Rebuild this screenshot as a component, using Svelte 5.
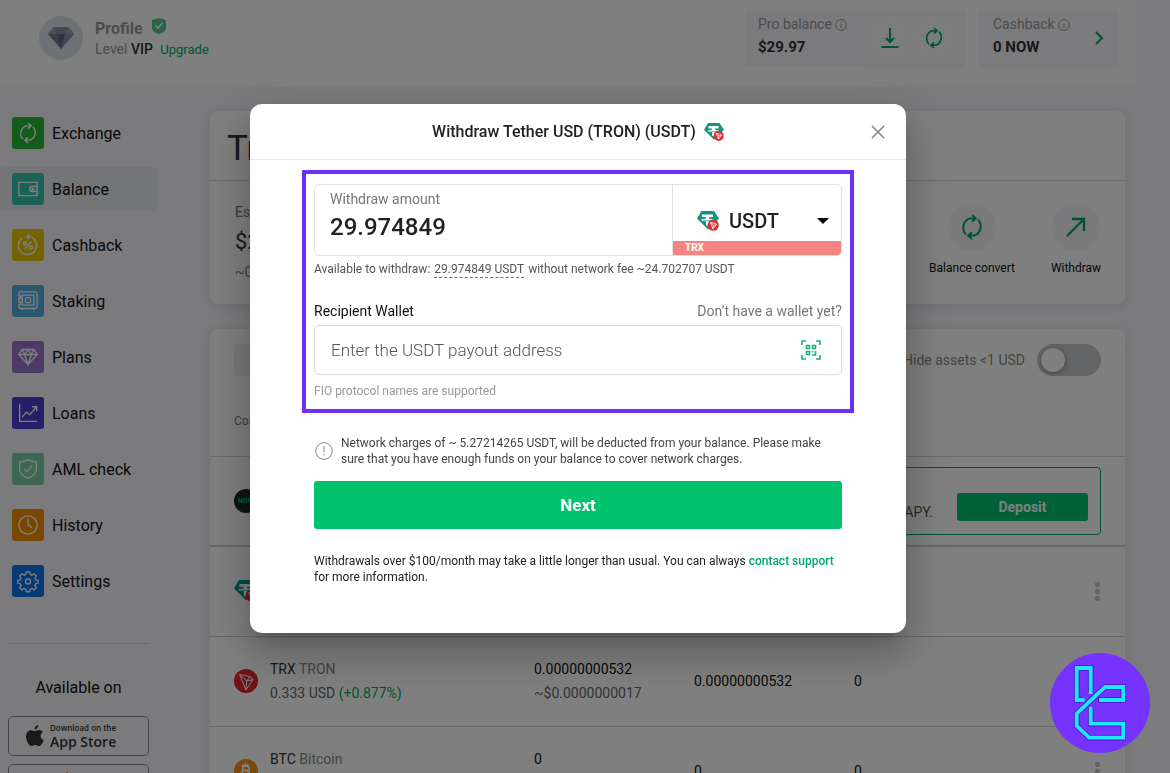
<script lang="ts">
  type NavItem = { label: string; color: string; icon: string };
  type Asset = {
    code: string;
    name: string;
    price: string;
    change: string;
    balance: string;
    value: string;
    available: string;
    locked: string;
    icon: string;
  };

  const nav: NavItem[] = [
    { label: 'Exchange', color: '#28b833', icon: 'exchange' },
    { label: 'Balance', color: '#36c4b2', icon: 'wallet' },
    { label: 'Cashback', color: '#e8c800', icon: 'percent' },
    { label: 'Staking', color: '#55aee0', icon: 'safe' },
    { label: 'Plans', color: '#9b74cc', icon: 'gem' },
    { label: 'Loans', color: '#4b3fd0', icon: 'chart' },
    { label: 'AML check', color: '#76cfa6', icon: 'shield' },
    { label: 'History', color: '#f58f00', icon: 'clock' },
    { label: 'Settings', color: '#0a74ea', icon: 'gear' },
  ];

  const assets: Asset[] = [
    { code: 'USDT', name: 'Tether', price: '1.000 USD', change: '(+0.01%)', balance: '29.974849', value: '~$29.97', available: '29.974849', locked: '0', icon: 'usdt' },
    { code: 'TRX', name: 'TRON', price: '0.333 USD', change: '(+0.877%)', balance: '0.00000000532', value: '~$0.0000000017', available: '0.00000000532', locked: '0', icon: 'trx' },
    { code: 'BTC', name: 'Bitcoin', price: '0 USD', change: '(+0%)', balance: '0', value: '~$0', available: '0', locked: '0', icon: 'btc' },
  ];

  let open = true;
  let amount = '29.974849';
  let currency = 'USDT';
  let address = '';
  let hideSmall = false;
</script>

{#snippet convert()}
  <path d="M6 19.500A10 10 0 0 1 9.500 3.400H15.500M12 0l3.800 3.400L12 6.800M18 4.500A10 10 0 0 1 14.500 20.600H8.500M12 17.200l-3.800 3.400L12 24" />
{/snippet}

{#snippet tether(size: number)}
  <svg width={size} height={size} viewBox="0 0 22 22" aria-hidden="true">
    <path d="M4.500 1h12.500L22 8.600 11 19.500 0 8.600z" fill="#109585" />
    <path d="M5 4.500h11v2.600h-4v1.400c2.800.2 4.800.7 4.800 1.400s-2 1.200-4.800 1.400v4.200H9v-4.200c-2.800-.2-4.800-.7-4.800-1.400S6.200 8.700 9 8.500V7.100H5z" fill="#fff" />
    <path d="M5.800 9.900c2.800.8 6.600.8 9.400 0" fill="none" stroke="#109585" stroke-width=".7" />
    <circle cx="16.200" cy="15.200" r="5.600" fill="#e02d33" />
    <path d="M13.500 12.600l5 .9 1 1.200-3.600 4zM13.500 12.600l3 2.800 3-.7M16.500 15.400l-.6 3.300" fill="none" stroke="#fff" stroke-width=".8" />
  </svg>
{/snippet}

{#snippet info()}
  <svg class="info" width="12" height="12" viewBox="0 0 12 12" aria-hidden="true">
    <circle cx="6" cy="6" r="5.400" />
    <path d="M6 5v4M6 2.800v1" />
  </svg>
{/snippet}

<div class="page">
  <header class="topbar">
    <div class="avatar">
      <svg width="26" height="24" viewBox="0 0 26 24" aria-hidden="true">
        <path d="M6 1h14l6 7-13 15L0 8z" fill="#707c94" />
        <path d="M6 1l3 7H0zM20 1l-3 7h9z" fill="#9aa5ba" />
        <path d="M6 1h14l-3 7H9z" fill="#8490a8" />
        <path d="M9 8h8l-4 15z" fill="#5c6881" />
        <path d="M17 8h9L13 23z" fill="#8490a8" />
      </svg>
    </div>
    <div class="profile">
      <div class="profile-name">
        <strong>Profile</strong>
        <svg width="14" height="16" viewBox="0 0 14 16" aria-hidden="true">
          <path d="M7 0l7 2v7c0 4-3 6-7 7-4-1-7-3-7-7V2z" fill="#58c493" />
          <path d="M3.500 7.500L6 10l4.500-5" fill="none" stroke="#fff" stroke-width="1.400" />
        </svg>
      </div>
      <div class="profile-level">Level <b>VIP</b> <a href="#upgrade">Upgrade</a></div>
    </div>
    <section class="stat stat-pro">
      <div class="stat-copy">
        <span>Pro balance {@render info()}</span>
        <strong>$29.97</strong>
      </div>
      <button type="button" aria-label="Deposit funds">
        <svg width="20" height="22" viewBox="0 0 20 22" aria-hidden="true"><path d="M10 1v14M6 11l4 4 4-4" /><path d="M1.500 20h17" stroke-width="2" /></svg>
      </button>
      <button type="button" aria-label="Convert">
        <svg width="20" height="20" viewBox="0 0 24 24" aria-hidden="true">{@render convert()}</svg>
      </button>
    </section>
    <section class="stat stat-cashback">
      <div class="stat-copy">
        <span>Cashback {@render info()}</span>
        <strong>0 NOW</strong>
      </div>
      <button type="button" class="chevron" aria-label="Open cashback">
        <svg width="10" height="14" viewBox="0 0 10 14" aria-hidden="true"><path d="M2 1l6 6-6 6" stroke-width="2" /></svg>
      </button>
    </section>
  </header>

  <div class="layout">
    <aside>
      <nav>
        {#each nav as item}
          <a href={`#${item.icon}`} class:active={item.label === 'Balance'}>
            <span class="nav-icon" style={`background:${item.color}`}>
              <svg width="20" height="20" viewBox="0 0 24 24" aria-hidden="true">
                {#if item.icon === 'exchange'}
                  {@render convert()}
                {:else if item.icon === 'wallet'}
                  <path d="M1 4h22v16H1zM23 9h-6a3 3 0 0 0 0 6h6M17 11.500h1.500v1.500H17z" />
                {:else if item.icon === 'percent'}
                  <path d="M17 3A11 11 0 1 1 5 3.500M16 2h-5M13.500-.8L10.500 2l3 2.800M8 17l8-9" />
                  <circle cx="8.500" cy="10" r="1.800" />
                  <circle cx="15.500" cy="15" r="1.800" />
                {:else if item.icon === 'safe'}
                  <path d="M3 1h18a2 2 0 0 1 2 2v16a2 2 0 0 1-2 2H3a2 2 0 0 1-2-2v-3h2v-3H1V9h2V6H1V3a2 2 0 0 1 2-2zM5 5h14v12H5zM5 21v2M19 21v2" />
                  <rect x="9" y="8" width="6" height="6" rx="2" />
                {:else if item.icon === 'gem'}
                  <path d="M5 3h14l4 6-11 12L1 9zM1 9h22M5 3l3 6 4-6 4 6 3-6M8 9l4 12 4-12" />
                {:else if item.icon === 'chart'}
                  <path d="M2 1v21h21M5 17l5-6 4 3 8-9M17 4.500h5.500V10" />
                {:else if item.icon === 'shield'}
                  <path d="M12 1l10 3v8c0 6-4 9-10 11C6 21 2 18 2 12V4zM7.500 11.500l3.500 4 6-8" />
                {:else if item.icon === 'clock'}
                  <circle cx="12" cy="12" r="11" />
                  <path d="M12 4.500V12l5 3.500" />
                {:else}
                  <path d="M10 1h4l.7 3 2 1 2.700-1.700 2.600 2.700-1.600 2.700.8 2 3 .8v3l-3 .8-.8 2 1.600 2.700-2.600 2.700-2.700-1.700-2 .9-.7 3h-4l-.7-3-2-.9-2.700 1.700L2 20l1.600-2.700-.8-2-3-.8v-3l3-.8.8-2L2 6l2.600-2.700L7.300 5l2-1z" />
                  <circle cx="12" cy="12.500" r="3" />
                {/if}
              </svg>
            </span>
            {item.label}
          </a>
        {/each}
      </nav>
      <hr />
      <p class="available-on">Available on</p>
      <a class="store" href="#app-store">
        <svg width="18" height="22" viewBox="0 0 18 22" aria-hidden="true">
          <path d="M12.300 0c.2 2-1.500 4.500-3.800 4.600C8.300 2.500 10.300.3 12.300 0zM9.200 6c1.200 0 2-1 3.800-1 1.600 0 3 .8 3.900 2.100-3.400 2-2.900 6.700.9 8.100-.7 2-2.800 5.800-5 5.800-1.400 0-1.900-.9-3.500-.9s-2.200.9-3.500.9C2.800 21 0 15.500 0 11.700 0 7.500 2.600 5.200 5.200 5.200c1.600 0 2.800.8 4 .8z" />
        </svg>
        <span><small>Download on the</small>App Store</span>
      </a>
      <a class="store" href="#google-play">
        <svg width="18" height="22" viewBox="0 0 18 22" aria-hidden="true"><path d="M1 1l16 10L1 21z" /></svg>
        <span><small>Get it on</small>Google Play</span>
      </a>
    </aside>

    <main>
      <section class="card">
        <h1>Trading balance</h1>
        <div class="summary">
          <div class="estimate">
            <span>Estimated balance</span>
            <strong>$29.97</strong>
            <span>~0.00028 BTC</span>
          </div>
          <button type="button" class="action">
            <span><svg width="24" height="24" viewBox="0 0 24 24" aria-hidden="true">{@render convert()}</svg></span>
            Balance convert
          </button>
          <button type="button" class="action action-withdraw">
            <span><svg width="20" height="20" viewBox="0 0 20 20" aria-hidden="true"><path d="M1 19L18 2M6 2h12v12" stroke-width="2.400" /></svg></span>
            Withdraw
          </button>
        </div>
      </section>

      <section class="card">
        <div class="filters">
          <input class="search" type="search" aria-label="Search assets" />
          <label class="hide-small">
            Hide assets &lt;1 USD
            <input type="checkbox" role="switch" bind:checked={hideSmall} />
          </label>
        </div>
        <table>
          <colgroup>
            <col class="col-coin" />
            <col class="col-sum" />
            <col class="col-sum" />
            <col />
            <col class="col-menu" />
          </colgroup>
          <thead>
            <tr><th>Coin</th><th>Balance</th><th>Available</th><th>Locked</th><th aria-label="Menu"></th></tr>
          </thead>
          <tbody>
            <tr class="promo-row">
              <td colspan="5">
                <div class="promo-wrap">
                  <span class="now-badge">NOW</span>
                  <div class="promo">
                    <span>Stake NOW tokens and earn up to 25% APY.</span>
                    <button type="button">Deposit</button>
                  </div>
                </div>
              </td>
            </tr>
            {#each assets as asset}
              <tr>
                <td>
                  <div class="coin">
                    {#if asset.icon === 'usdt'}
                      {@render tether(24)}
                    {:else if asset.icon === 'trx'}
                      <svg width="24" height="24" viewBox="0 0 24 24" aria-hidden="true">
                        <circle cx="12" cy="12" r="12" fill="#e0232b" />
                        <path d="M5.500 5.500l10.500 2 3 3.200L11.800 21zM5.500 5.500l7.300 6.400L19 10.700M12.800 11.900l-1 9.100M12.800 11.900L16 7.500" fill="none" stroke="#fff" />
                      </svg>
                    {:else}
                      <svg width="24" height="24" viewBox="0 0 24 24" aria-hidden="true">
                        <circle cx="12" cy="12" r="12" fill="#f7931a" />
                        <path d="M9.500 6.500l-2 10.500M8 6.300l4.500.8c4.500.8 3.500 5-.5 4.500l-3-.5M12 11.600c4.800.8 3.800 6-.8 5.200L6 16M11.500 4.500l-.5 2.300M14 5l-.5 2.300M9.500 17l-.5 2.500M12 17.300l-.5 2.500" fill="none" stroke="#fff" stroke-width="1.800" />
                      </svg>
                    {/if}
                    <div>
                      <b>{asset.code}</b> {asset.name}<br />
                      <span class="price">{asset.price}</span> <span class="up">{asset.change}</span>
                    </div>
                  </div>
                </td>
                <td>{asset.balance}<br /><span class="price">{asset.value}</span></td>
                <td>{asset.available}</td>
                <td>{asset.locked}</td>
                <td>
                  <button type="button" class="kebab" aria-label={`${asset.code} menu`}>
                    <i></i><i></i><i></i>
                  </button>
                </td>
              </tr>
            {/each}
          </tbody>
        </table>
      </section>
    </main>
  </div>
</div>

{#if open}
  <div class="overlay">
    <div class="modal" role="dialog" aria-modal="true" aria-labelledby="withdraw-title">
      <div class="modal-head">
        <h2 id="withdraw-title">Withdraw Tether USD (TRON) (USDT)</h2>
        {@render tether(20)}
        <button type="button" class="close" aria-label="Close" on:click={() => (open = false)}>
          <svg width="14" height="14" viewBox="0 0 14 14" aria-hidden="true"><path d="M1 1l12 12M13 1L1 13" /></svg>
        </button>
      </div>

      <form on:submit|preventDefault>
        <div class="highlight">
          <div class="amount-field">
            <div class="amount">
              <label for="amount">Withdraw amount</label>
              <input id="amount" type="text" inputmode="decimal" bind:value={amount} />
            </div>
            <div class="currency">
              <div class="currency-pick">
                {@render tether(22)}
                <select aria-label="Currency" bind:value={currency}>
                  <option>USDT</option>
                  <option>TRX</option>
                  <option>BTC</option>
                </select>
                <svg class="caret" width="12" height="6" viewBox="0 0 12 6" aria-hidden="true"><path d="M0 0h12L6 6z" /></svg>
              </div>
              <span class="network">TRX</span>
            </div>
          </div>
          <p class="limits">
            Available to withdraw:
            <button type="button" on:click={() => (amount = '29.974849')}>29.974849 USDT</button>
            without network fee ~24.702707 USDT
          </p>

          <div class="wallet-head">
            <label for="wallet">Recipient Wallet</label>
            <a href="#wallet-help">Don’t have a wallet yet?</a>
          </div>
          <div class="wallet-field">
            <input id="wallet" type="text" placeholder="Enter the USDT payout address" bind:value={address} />
            <button type="button" aria-label="Scan QR code">
              <svg width="20" height="20" viewBox="0 0 20 20" aria-hidden="true">
                <path d="M1 5V1h4M15 1h4v4M19 15v4h-4M5 19H1v-4" />
                <path d="M5.500 5.500h3v3h-3zM11.500 5.500h3v3h-3zM5.500 11.500h3v3h-3zM11.500 11v1.500M14.500 11v4h-3.500" />
              </svg>
            </button>
          </div>
          <p class="fio">FIO protocol names are supported</p>
        </div>

        <div class="notice">
          <svg width="18" height="18" viewBox="0 0 18 18" aria-hidden="true">
            <circle cx="9" cy="9" r="8.300" />
            <path d="M9 4v6.500M9 12v1.500" />
          </svg>
          <p>
            Network charges of ~ 5.27214265 USDT, will be deducted from your balance. Please make sure that you have
            enough funds on your balance to cover network charges.
          </p>
        </div>
        <button type="submit" class="next">Next</button>
        <p class="support">
          Withdrawals over $100/month may take a little longer than usual. You can always
          <a href="#support">contact support</a> for more information.
        </p>
      </form>
    </div>
  </div>
{/if}

<svg class="brand" width="100" height="100" viewBox="0 0 100 100" role="img" aria-label="Brand mark">
  <circle cx="50" cy="50" r="50" fill="#7632ff" />
  <g fill="none" stroke="#4a17cc" stroke-width="5.600">
    <path d="M33 47H26.700V15H40.700V40" />
    <path d="M48 47H73.300V34H55L26.700 60.500V73L39.300 84.700H73.300V70.700H40.700V54" />
  </g>
  <g fill="none" stroke="#1ce8fa" stroke-width="3.800">
    <path d="M34.500 47H26.700V15H40.700V41" />
    <path d="M49 47H73.300V34H55L26.700 60.500V73L39.300 84.700H73.300V70.700H40.700V54" />
  </g>
</svg>

<style>
  :global(body) {
    margin: 0;
    overflow: hidden;
    background: #f6f6fa;
  }

  .page,
  .overlay {
    font-family: Roboto, 'Liberation Sans', sans-serif;
    font-size: 14px;
    color: #222;
  }

  .page *,
  .overlay * {
    box-sizing: border-box;
  }

  button,
  input,
  select {
    font: inherit;
    color: inherit;
    border: 0;
    padding: 0;
    background: none;
  }

  a {
    color: inherit;
    text-decoration: none;
  }

  p,
  h1,
  h2 {
    margin: 0;
  }

  svg {
    flex: none;
  }

  .page {
    height: 100vh;
    overflow: hidden;
  }

  .topbar {
    display: flex;
    align-items: flex-start;
    height: 87px;
    margin-right: 34px;
    padding: 9px 17px 0 39px;
    background: #fff;
    box-sizing: border-box;
  }

  .avatar {
    display: grid;
    place-items: center;
    width: 44px;
    height: 44px;
    margin-top: 7px;
    border-radius: 50%;
    background: #dde2ec;
  }

  .profile {
    flex: 1;
    margin: 9px 0 0 12px;
    color: #999;
  }

  .profile-name {
    display: flex;
    gap: 9px;
    line-height: 22px;
    font-size: 16px;
  }

  .profile-level {
    line-height: 18px;
  }

  .profile-level b {
    font-weight: 500;
    color: #333;
  }

  .profile-level a {
    margin-left: 4px;
    font-size: 13px;
    color: #00a862;
  }

  .stat {
    display: flex;
    align-items: center;
    height: 58px;
    padding: 0 10px 0 13px;
    border-radius: 4px;
    background: #f6f6fa;
  }

  .stat-pro {
    width: 221px;
    margin-right: 12px;
  }

  .stat-cashback {
    width: 141px;
    padding-left: 15px;
  }

  .stat-copy {
    flex: 1;
    align-self: flex-start;
    padding-top: 3px;
    line-height: 24px;
    color: #999;
  }

  .stat-copy span,
  .stat-copy strong {
    display: block;
  }

  .stat-copy strong {
    font-size: 15px;
    line-height: 22px;
    color: #333;
  }

  .stat button {
    display: grid;
    place-items: center;
    width: 44px;
    height: 44px;
    border-radius: 50%;
    background: #f8f8fa;
  }

  .stat button.chevron {
    width: 20px;
    background: none;
  }

  .stat button svg,
  .action svg {
    overflow: visible;
    fill: none;
    stroke: #00a862;
    stroke-width: 2;
  }

  .info {
    vertical-align: -2px;
    fill: none;
    stroke: #999;
  }

  .layout {
    display: flex;
    padding: 24px 45px 0 0;
  }

  aside {
    width: 157px;
    margin-right: 53px;
    flex: none;
  }

  nav {
    display: grid;
    gap: 12px;
  }

  nav a {
    display: flex;
    align-items: center;
    gap: 8px;
    height: 44px;
    padding-left: 12px;
    border-radius: 4px;
    font-size: 16px;
    color: #111;
  }

  nav a.active {
    background: #e8eaee;
  }

  .nav-icon {
    display: grid;
    place-items: center;
    width: 32px;
    height: 32px;
    border-radius: 3px;
  }

  .nav-icon svg {
    overflow: visible;
    fill: none;
    stroke: #fff;
    stroke-width: 1.6;
  }

  hr {
    margin: 40px 9px 0 8px;
    border: 0;
    border-top: 1px solid #d5d5da;
  }

  .available-on {
    margin: 33px 0 18px;
    line-height: 21px;
    font-size: 16px;
    text-align: center;
    color: #111;
  }

  .store {
    display: flex;
    align-items: center;
    gap: 6px;
    width: 141px;
    height: 40px;
    margin: 0 0 8px 8px;
    padding-left: 17px;
    border: 1px solid #8a8a8e;
    border-radius: 5px;
    font-family: 'Open Sans', sans-serif;
    font-size: 14px;
    font-weight: 600;
    line-height: 16px;
    color: #333;
  }

  .store svg {
    fill: #333;
  }

  .store small {
    display: block;
    font-size: 8px;
    line-height: 12px;
  }

  main {
    flex: 1;
    min-width: 0;
  }

  .card {
    margin-bottom: 25px;
    border-radius: 8px;
    background: #fff;
    box-shadow: 0 2px 12px rgba(40, 40, 60, 0.12);
  }

  h1 {
    padding: 17px 17px 11px;
    border-bottom: 1px solid #d5d5d5;
    font-size: 35px;
    line-height: 41px;
    font-weight: 400;
    color: #333;
  }

  .summary {
    display: flex;
    align-items: flex-start;
    height: 123px;
    padding: 22px 23px 0 25px;
  }

  .estimate {
    flex: 1;
    display: grid;
    line-height: 18px;
    color: #777;
  }

  .estimate strong {
    font-size: 22px;
    font-weight: 400;
    line-height: 42px;
    color: #333;
  }

  .action {
    display: grid;
    justify-items: center;
    gap: 8px;
    width: 104px;
    font-size: 12px;
    line-height: 18px;
    color: #111;
  }

  .action-withdraw {
    width: 52px;
    margin-left: 26px;
  }

  .action span {
    display: grid;
    place-items: center;
    width: 48px;
    height: 48px;
    border-radius: 50%;
    background: #f5f5f8;
  }

  .filters {
    display: flex;
    justify-content: space-between;
    align-items: center;
    padding: 15px 24px 11px;
  }

  .search {
    width: 280px;
    height: 32px;
    border-radius: 4px;
    background: #f0f0f4;
  }

  .hide-small {
    display: flex;
    align-items: center;
    gap: 12px;
    color: #888;
  }

  .hide-small input {
    appearance: none;
    width: 64px;
    height: 32px;
    margin: 0;
    padding: 4px;
    border-radius: 16px;
    background: #c6c8ca;
  }

  .hide-small input::before {
    content: '';
    display: block;
    width: 24px;
    height: 24px;
    border-radius: 50%;
    background: #fff;
    box-shadow: 0 1px 4px rgba(0, 0, 0, 0.4);
  }

  .hide-small input:checked::before {
    margin-left: auto;
  }

  table {
    width: 100%;
    table-layout: fixed;
    border-collapse: collapse;
  }

  .col-coin {
    width: 324px;
  }

  .col-sum {
    width: 160px;
  }

  .col-menu {
    width: 60px;
  }

  th,
  td {
    padding: 0;
    text-align: left;
    line-height: 24px;
  }

  th {
    height: 69px;
    border-bottom: 1px solid #d5d5d5;
    font-size: 12px;
    font-weight: 400;
    color: #777;
  }

  th:first-child {
    padding-left: 24px;
  }

  td {
    height: 90px;
    border-bottom: 1px solid #cfcfcf;
    font-size: 14px;
    color: #111;
  }

  .promo-row td {
    border-bottom: 2px solid #cfcfcf;
  }

  .promo-wrap {
    display: flex;
    align-items: center;
    gap: 12px;
    padding: 0 24px;
  }

  .now-badge {
    display: grid;
    place-items: center;
    width: 24px;
    height: 24px;
    border-radius: 50%;
    background: #1c2a26;
    font-size: 7px;
    font-weight: 700;
    color: #00c26f;
  }

  .promo {
    display: flex;
    flex: 1;
    justify-content: flex-end;
    align-items: center;
    gap: 24px;
    height: 68px;
    padding: 12px 12px 0;
    border: 1px solid #00a862;
    border-radius: 4px;
    color: #555;
  }

  .promo span {
    padding-top: 10px;
  }

  .promo button {
    width: 131px;
    height: 28px;
    border-radius: 3px;
    background: #00c26f;
    font-weight: 700;
    color: #fff;
  }

  .coin {
    display: flex;
    align-items: center;
    gap: 12px;
    padding-left: 24px;
    color: #888;
  }

  .coin b {
    font-weight: 400;
    color: #333;
  }

  .price {
    color: #666;
  }

  .up {
    color: #00a862;
  }

  .kebab {
    display: grid;
    gap: 2px;
    margin-left: 30px;
  }

  .kebab i {
    width: 5px;
    height: 5px;
    border-radius: 2px;
    background: #c4c4c4;
  }

  .overlay {
    position: fixed;
    inset: 0;
    display: grid;
    place-items: center;
    padding: 0 14px 36px 0;
    background: rgba(0, 0, 0, 0.5);
    box-sizing: border-box;
  }

  .modal {
    width: 656px;
    max-width: 100%;
    border-radius: 12px;
    background: #fff;
    box-shadow:
      0 11px 15px -7px rgba(0, 0, 0, 0.2),
      0 24px 38px 3px rgba(0, 0, 0, 0.14),
      0 9px 46px 8px rgba(0, 0, 0, 0.12);
  }

  .modal-head {
    position: relative;
    display: flex;
    justify-content: center;
    align-items: center;
    gap: 8px;
    height: 56px;
    border-bottom: 1px solid #e8e8ea;
  }

  h2 {
    font-size: 16px;
    font-weight: 500;
    color: #222;
  }

  .close {
    position: absolute;
    top: 21px;
    right: 21px;
    display: grid;
  }

  .close svg {
    fill: none;
    stroke: #888;
    stroke-width: 1.6;
  }

  form {
    padding: 10px 52px 48px;
  }

  .highlight {
    padding: 10px 8px 9px;
    border: 4px solid #6f30f5;
  }

  .amount-field {
    display: flex;
    height: 72px;
    border: 1px solid #dfe3e6;
    border-radius: 5px;
    overflow: hidden;
  }

  .amount {
    flex: 1;
    min-width: 0;
    padding: 4px 15px;
  }

  .amount label {
    display: block;
    line-height: 20px;
    color: #777;
  }

  .amount input {
    width: 100%;
    line-height: 36px;
    font-size: 24px;
    font-weight: 500;
  }

  .currency {
    display: flex;
    flex-direction: column;
    width: 169px;
    border-left: 1px solid #dfe3e6;
  }

  .currency-pick {
    display: flex;
    flex: 1;
    align-items: center;
    gap: 10px;
    padding: 16px 12px 0 24px;
  }

  .currency-pick select {
    flex: 1;
    min-width: 0;
    appearance: none;
    font-size: 20px;
    font-weight: 500;
  }

  .network {
    padding-left: 12px;
    background: #f48582;
    font-size: 10px;
    font-weight: 700;
    line-height: 14px;
    color: #fff;
  }

  .limits {
    margin: 4px 0 23px;
    font-size: 12px;
    line-height: 18px;
    color: #555;
  }

  .limits button {
    margin: 0 1px;
    border-bottom: 1px dashed #00a878;
    line-height: 16px;
  }

  .wallet-head {
    display: flex;
    justify-content: space-between;
    line-height: 20px;
    margin-bottom: 4px;
    color: #777;
  }

  .wallet-head label {
    color: #111;
  }

  .wallet-field {
    display: flex;
    align-items: center;
    height: 50px;
    padding: 0 20px 0 16px;
    border: 1px solid #d9dcdf;
    border-radius: 5px;
  }

  .wallet-field input {
    flex: 1;
    min-width: 0;
    font-size: 17px;
    font-weight: 300;
  }

  .wallet-field input::placeholder {
    color: #555;
    opacity: 1;
  }

  .wallet-field button {
    display: grid;
  }

  .wallet-field svg {
    fill: none;
    stroke: #19b080;
    stroke-width: 1.6;
  }

  .fio {
    margin-top: 7px;
    font-size: 12px;
    line-height: 18px;
    color: #999;
  }

  .notice {
    display: flex;
    align-items: center;
    gap: 8px;
    margin: 22px 12px 14px;
    font-size: 12px;
    line-height: 16px;
    color: #444;
  }

  .notice svg {
    margin-left: 1px;
    fill: none;
    stroke: #888;
  }

  .next {
    display: block;
    width: calc(100% - 24px);
    height: 48px;
    margin: 0 12px 24px;
    border-radius: 3px;
    background: #00c26f;
    font-size: 17px;
    font-weight: 700;
    color: #fff;
  }

  .support {
    margin: 0 12px;
    font-size: 12px;
    line-height: 16px;
    color: #222;
  }

  .support a {
    font-weight: 500;
    color: #00a878;
  }

  .brand {
    position: fixed;
    right: 20px;
    bottom: 20px;
  }
</style>
